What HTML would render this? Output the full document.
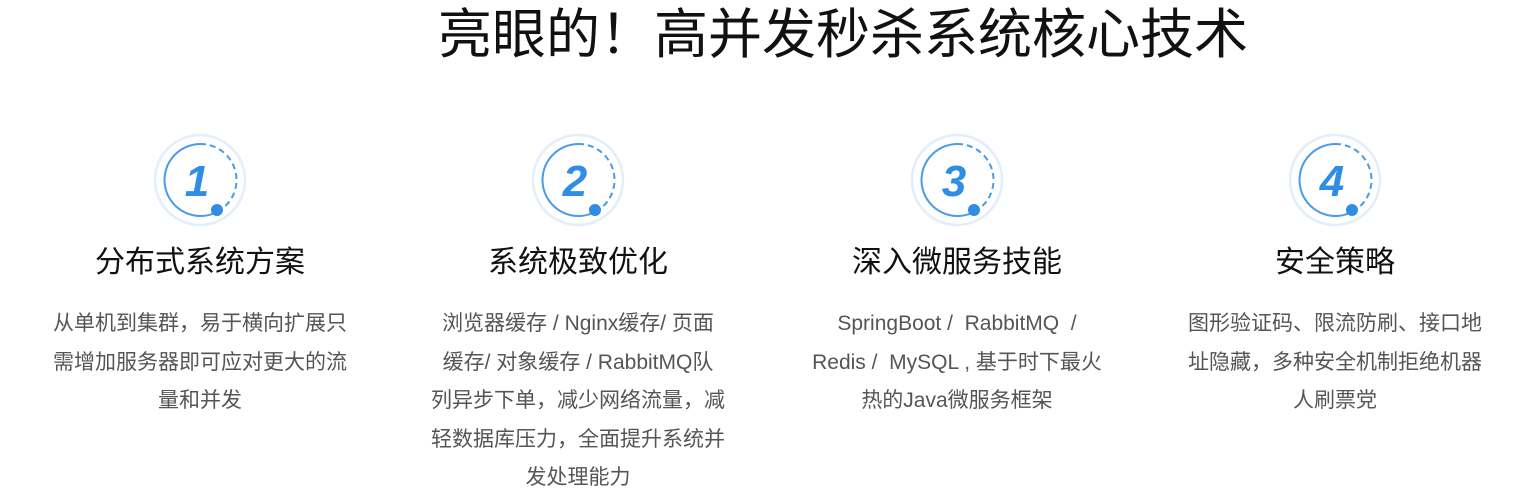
<!DOCTYPE html>
<html><head><meta charset="utf-8">
<style>
html,body{margin:0;padding:0;background:#fff;}
body{width:1520px;height:501px;position:relative;overflow:hidden;font-family:"Liberation Sans","Noto Sans CJK SC",sans-serif;}
h1{position:absolute;left:0;width:1686px;top:1px;margin:0;text-align:center;font-weight:normal;font-size:54px;line-height:68px;color:#111;}
.col{position:absolute;top:133px;width:360px;text-align:center;}
.col svg{display:block;margin:0 auto;}
.col h2{margin:10px 0 0;font-weight:normal;font-size:30px;line-height:40px;color:#111;}
.col p{margin:22px 0 0;font-size:21px;line-height:38.5px;color:#555;}
</style></head><body>
<h1>亮眼的！高并发秒杀系统核心技术</h1>

<div class="col" style="left:20px">
<svg width="100" height="100" viewBox="0 0 100 100">
<circle cx="50" cy="47" r="45" fill="none" stroke="#e2eefb" stroke-width="2.5"/>
<path d="M67 79 A36 36 0 1 1 50 11" fill="none" stroke="#4a9be8" stroke-width="2"/>
<path d="M50 11 A36 36 0 0 1 67 79" fill="none" stroke="#4a9be8" stroke-width="2" stroke-dasharray="6 4"/>
<circle cx="67" cy="77" r="6" fill="#2f8de4"/>
<text x="47" y="63" text-anchor="middle" font-family="Liberation Sans" font-weight="bold" font-style="italic" font-size="44" fill="#2f8de4">1</text>
</svg>
<h2>分布式系统方案</h2>
<p>从单机到集群，易于横向扩展只<br>需增加服务器即可应对更大的流<br>量和并发</p>
</div>

<div class="col" style="left:398px">
<svg width="100" height="100" viewBox="0 0 100 100">
<circle cx="50" cy="47" r="45" fill="none" stroke="#e2eefb" stroke-width="2.5"/>
<path d="M67 79 A36 36 0 1 1 50 11" fill="none" stroke="#4a9be8" stroke-width="2"/>
<path d="M50 11 A36 36 0 0 1 67 79" fill="none" stroke="#4a9be8" stroke-width="2" stroke-dasharray="6 4"/>
<circle cx="67" cy="77" r="6" fill="#2f8de4"/>
<text x="47" y="63" text-anchor="middle" font-family="Liberation Sans" font-weight="bold" font-style="italic" font-size="44" fill="#2f8de4">2</text>
</svg>
<h2>系统极致优化</h2>
<p>浏览器缓存 / Nginx缓存/ 页面<br>缓存/ 对象缓存 / RabbitMQ队<br>列异步下单，减少网络流量，减<br>轻数据库压力，全面提升系统并<br>发处理能力</p>
</div>

<div class="col" style="left:777px">
<svg width="100" height="100" viewBox="0 0 100 100">
<circle cx="50" cy="47" r="45" fill="none" stroke="#e2eefb" stroke-width="2.5"/>
<path d="M67 79 A36 36 0 1 1 50 11" fill="none" stroke="#4a9be8" stroke-width="2"/>
<path d="M50 11 A36 36 0 0 1 67 79" fill="none" stroke="#4a9be8" stroke-width="2" stroke-dasharray="6 4"/>
<circle cx="67" cy="77" r="6" fill="#2f8de4"/>
<text x="47" y="63" text-anchor="middle" font-family="Liberation Sans" font-weight="bold" font-style="italic" font-size="44" fill="#2f8de4">3</text>
</svg>
<h2>深入微服务技能</h2>
<p>SpringBoot /&nbsp; RabbitMQ&nbsp; /<br>Redis /&nbsp; MySQL , 基于时下最火<br>热的Java微服务框架</p>
</div>

<div class="col" style="left:1155px">
<svg width="100" height="100" viewBox="0 0 100 100">
<circle cx="50" cy="47" r="45" fill="none" stroke="#e2eefb" stroke-width="2.5"/>
<path d="M67 79 A36 36 0 1 1 50 11" fill="none" stroke="#4a9be8" stroke-width="2"/>
<path d="M50 11 A36 36 0 0 1 67 79" fill="none" stroke="#4a9be8" stroke-width="2" stroke-dasharray="6 4"/>
<circle cx="67" cy="77" r="6" fill="#2f8de4"/>
<text x="47" y="63" text-anchor="middle" font-family="Liberation Sans" font-weight="bold" font-style="italic" font-size="44" fill="#2f8de4">4</text>
</svg>
<h2>安全策略</h2>
<p>图形验证码、限流防刷、接口地<br>址隐藏，多种安全机制拒绝机器<br>人刷票党</p>
</div>
</body></html>
